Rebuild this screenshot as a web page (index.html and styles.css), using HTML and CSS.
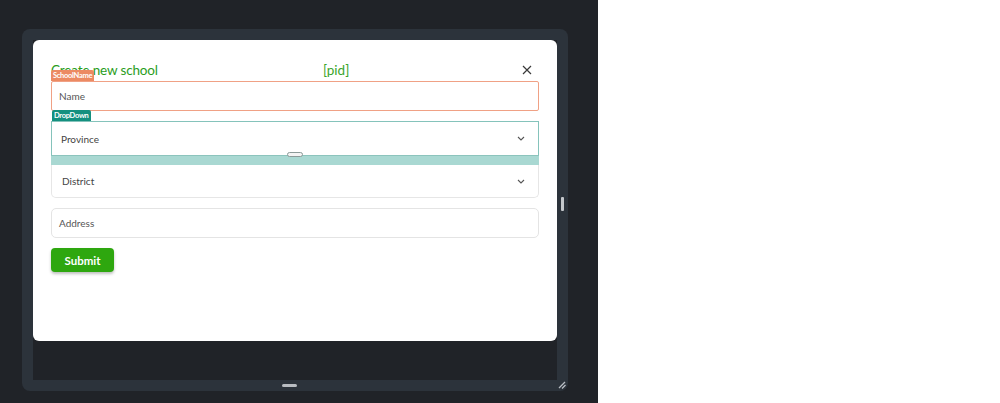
FILE: index.html
```html
<!DOCTYPE html>
<html>
<head>
<meta charset="utf-8">
<link rel="stylesheet" href="styles.css">
</head>
<body>
<div class="stage">
  <div class="frame">
    <div class="viewport">
      <div class="card">
        <div class="head">
          <span class="title">Create new school</span>
          <span class="pid">[pid]</span>
          <svg class="close" width="10" height="10" viewBox="0 0 10 10"><path d="M1 1L9 9M9 1L1 9" stroke="#3a3a3a" stroke-width="1.2" fill="none"/></svg>
        </div>
        <div class="field-wrap">
          <span class="tag tag-orange">SchoolName</span>
          <div class="input input-name">Name</div>
        </div>
        <div class="field-wrap dd-wrap">
          <span class="tag tag-teal">DropDown</span>
          <div class="dd-outline">
            <div class="select">Province
              <svg class="chev" width="8" height="5" viewBox="0 0 8 5"><path d="M1 1l3 3 3-3" stroke="#555" stroke-width="1.1" fill="none"/></svg>
            </div>
          </div>
          <div class="dd-band"></div>
          <span class="dd-handle"></span>
        </div>
        <div class="select select-plain">District
          <svg class="chev" width="8" height="5" viewBox="0 0 8 5"><path d="M1 1l3 3 3-3" stroke="#555" stroke-width="1.1" fill="none"/></svg>
        </div>
        <div class="input input-plain">Address</div>
        <button class="submit">Submit</button>
      </div>
    </div>
    <span class="scroll-thumb"></span>
    <span class="bottom-handle"></span>
    <svg class="grip" width="10" height="10" viewBox="0 0 10 10"><path d="M3 9L9 3M6 9.5L9.5 6" stroke="#b9bec4" stroke-width="1.3" fill="none"/></svg>
  </div>
</div>
<div class="blank"></div>
</body>
</html>
```
FILE: styles.css
```css
html, body {
  margin: 0;
  padding: 0;
}
body {
  display: flex;
  width: 1000px;
  height: 403px;
  background: #ffffff;
  font-family: "Lato", "Noto Sans", sans-serif;
  overflow: hidden;
}
.stage {
  width: 598px;
  height: 403px;
  background: #202328;
  padding: 29px 0 0 22px;
  box-sizing: border-box;
}
.blank {
  flex: 1;
  background: #ffffff;
}
.frame {
  position: relative;
  width: 546px;
  height: 362px;
  box-sizing: border-box;
  padding: 11px;
  background: #2c333b;
  border-radius: 8px;
}
.viewport {
  width: 524px;
  height: 340px;
  background: #202328;
}
.card {
  height: 301px;
  box-sizing: border-box;
  background: #ffffff;
  border-radius: 6px;
  padding: 19px 18px 0 18px;
  display: flex;
  flex-direction: column;
}
.head {
  display: flex;
  align-items: center;
  height: 22px;
  position: relative;
}
.title {
  font-size: 13.5px;
  color: #2a9d1c;
  width: 272px;
  letter-spacing: -0.15px;
}
.pid {
  font-size: 13.5px;
  color: #3aa52b;
}
.close {
  margin-left: auto;
  margin-right: 7px;
}
.field-wrap {
  position: relative;
}
.tag {
  position: absolute;
  top: -11px;
  left: 0;
  height: 11px;
  line-height: 11px;
  padding: 0 2px;
  font-size: 7.5px;
  font-weight: 700;
  color: #ffffff;
  border-radius: 2px 2px 0 0;
  z-index: 2;
  letter-spacing: -0.3px;
}
.tag-orange {
  background: #ec8a63;
}
.tag-teal {
  background: #14907f;
  left: 1px;
}
.input {
  height: 30px;
  box-sizing: border-box;
  font-size: 10px;
  color: #555;
  padding-left: 7px;
  display: flex;
  align-items: center;
}
.input-name {
  border: 1px solid #f0a185;
  border-radius: 2px;
}
.dd-wrap {
  margin-top: 10px;
}
.dd-outline {
  border: 1px solid #85c3bb;
  border-bottom: none;
}
.select {
  height: 33px;
  box-sizing: border-box;
  display: flex;
  align-items: center;
  padding: 0 13px 0 9px;
  font-size: 10px;
  color: #444;
}
.chev {
  margin-left: auto;
}
.dd-band {
  height: 10px;
  background: #a9d8d2;
  border-top: 1px solid #8cc4bd;
  box-sizing: border-box;
}
.dd-handle {
  position: absolute;
  left: 236px;
  top: 31px;
  width: 16px;
  height: 5px;
  box-sizing: border-box;
  background: #f3f3f3;
  border: 1px solid #8b9a98;
  border-radius: 3px;
}
.select-plain {
  border: 1px solid #e6e6e6;
  border-top: none;
  border-radius: 0 0 5px 5px;
  padding-left: 10px;
}
.input-plain {
  margin-top: 10px;
  border: 1px solid #e4e4e4;
  border-radius: 5px;
}
.submit {
  margin-top: 10px;
  width: 63px;
  height: 24px;
  border: none;
  border-radius: 4px;
  background: #2ea70f;
  color: #ffffff;
  font-family: "Lato", "Noto Sans", sans-serif;
  font-weight: 700;
  font-size: 11.5px;
  box-shadow: 0 2px 3px rgba(0, 0, 0, 0.25);
  padding: 0;
}
.scroll-thumb {
  position: absolute;
  right: 4px;
  top: 168px;
  width: 3px;
  height: 14px;
  background: #c4c8cc;
  border-radius: 1px;
}
.bottom-handle {
  position: absolute;
  left: 260px;
  bottom: 4px;
  width: 15px;
  height: 3px;
  background: #b9bdc2;
  border-radius: 2px;
}
.grip {
  position: absolute;
  right: 2px;
  bottom: 2px;
}
```
